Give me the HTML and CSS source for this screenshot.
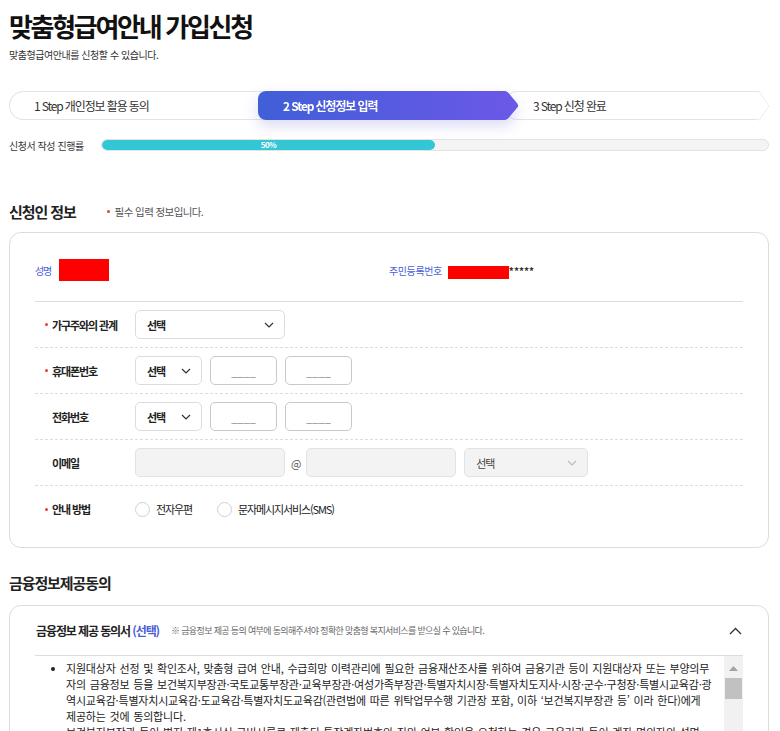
FILE: index.html
```html
<!DOCTYPE html>
<html lang="ko">
<head>
    <meta charset="UTF-8">
    <meta name="viewport" content="width=device-width, initial-scale=1.0">
    <title>맞춤형급여안내 가입신청</title>
    <link rel="stylesheet" href="styles.css">
</head>
<body>

<div class="page">
    <h1 class="title">맞춤형급여안내 가입신청</h1>
    <p class="desc">맞춤형급여안내를 신청할 수 있습니다.</p>

    <ol class="steps">
        <li class="step step-first">1 Step 개인정보 활용 동의</li>
        <li class="step step-on">2 Step 신청정보 입력</li>
        <li class="step step-last">3 Step 신청 완료</li>
    </ol>

    <div class="progress">
        <span class="progress-label">신청서 작성 진행률</span>
        <div class="progress-bar">
            <div class="progress-fill" style="width: 50%">50%</div>
        </div>
    </div>

    <div class="sec-head">
        <h2 class="sec-title">신청인 정보</h2>
        <span class="req-note"><i class="dot"></i>필수 입력 정보입니다.</span>
    </div>

    <div class="card">
        <div class="person">
            <div class="person-item">
                <span class="person-label">성명</span>
                <span class="mask mask-name"></span>
            </div>
            <div class="person-item">
                <span class="person-label">주민등록번호</span>
                <span class="mask mask-id"></span><span class="stars">*****</span>
            </div>
        </div>

        <div class="form-row">
            <div class="form-label"><i class="dot"></i>가구주와의 관계</div>
            <div class="form-field">
                <div class="select select-wide">
                    <span>선택</span>
                    <svg width="10" height="6" viewBox="0 0 10 6"><path d="M1 1l4 4 4-4" fill="none" stroke="#333" stroke-width="1.2"/></svg>
                </div>
            </div>
        </div>

        <div class="form-row">
            <div class="form-label"><i class="dot"></i>휴대폰번호</div>
            <div class="form-field">
                <div class="select select-small">
                    <span>선택</span>
                    <svg width="10" height="6" viewBox="0 0 10 6"><path d="M1 1l4 4 4-4" fill="none" stroke="#333" stroke-width="1.2"/></svg>
                </div>
                <input class="input input-phone" type="text" placeholder="____">
                <input class="input input-phone" type="text" placeholder="____">
            </div>
        </div>

        <div class="form-row">
            <div class="form-label"><i class="dot dot-none"></i>전화번호</div>
            <div class="form-field">
                <div class="select select-small">
                    <span>선택</span>
                    <svg width="10" height="6" viewBox="0 0 10 6"><path d="M1 1l4 4 4-4" fill="none" stroke="#333" stroke-width="1.2"/></svg>
                </div>
                <input class="input input-phone" type="text" placeholder="____">
                <input class="input input-phone" type="text" placeholder="____">
            </div>
        </div>

        <div class="form-row">
            <div class="form-label"><i class="dot dot-none"></i>이메일</div>
            <div class="form-field">
                <input class="input input-gray" type="text">
                <span class="at">@</span>
                <input class="input input-gray" type="text">
                <div class="select select-mail">
                    <span>선택</span>
                    <svg width="10" height="6" viewBox="0 0 10 6"><path d="M1 1l4 4 4-4" fill="none" stroke="#bbb" stroke-width="1.1"/></svg>
                </div>
            </div>
        </div>

        <div class="form-row">
            <div class="form-label"><i class="dot"></i>안내 방법</div>
            <div class="form-field">
                <label class="radio"><span class="radio-circle"></span>전자우편</label>
                <label class="radio"><span class="radio-circle"></span>문자메시지서비스(SMS)</label>
            </div>
        </div>
    </div>

    <div class="sec-head sec-head-2">
        <h2 class="sec-title">금융정보제공동의</h2>
    </div>

    <div class="card card-agree">
        <div class="agree-head">
            <strong class="agree-title">금융정보 제공 동의서 <em>(선택)</em></strong>
            <span class="agree-note">※ 금융정보 제공 등의 여부에 동의해주셔야 정확한 맞춤형 복지서비스를 받으실 수 있습니다.</span>
            <svg class="agree-toggle" width="13" height="8" viewBox="0 0 13 8"><path d="M1 7l5.5-5.5L12 7" fill="none" stroke="#333" stroke-width="1.3"/></svg>
        </div>
        <div class="agree-box">
            <div class="agree-scroll">
                <ul class="agree-list">
                    <li>지원대상자 선정 및 확인조사, 맞춤형 급여 안내, 수급희망 이력관리에 필요한 금융재산조사를 위하여 금융기관 등이 지원대상자 또는 부양의무자의 금융정보 등을 보건복지부장관·국토교통부장관·교육부장관·여성가족부장관·특별자치시장·특별자치도지사·시장·군수·구청장·특별시교육감·광역시교육감·특별자치시교육감·도교육감·특별자치도교육감(관련법에 따른 위탁업무수행 기관장 포함, 이하 ‘보건복지부장관 등’ 이라 한다)에게 제공하는 것에 동의합니다.</li>
                    <li>보건복지부장관 등이 별지 제1호서식 구비서류로 제출된 통장계좌번호의 진위 여부 확인을 요청하는 경우 금융기관 등이 계좌 명의자의 성명, 주민등록번호, 계좌번호 등을 보건복지부장관 등에게 제공하는 것에 동의합니다.</li>
                    <li>금융기관 등이 보건복지부장관 등에게 금융정보 등을 제공한 사실을 명의인에게 통보하지 아니하는 것에 동의합니다.</li>
                    <li>이 동의서의 효력은 조사 및 급여 안내가 끝나는 날까지 유지되며, 동의한 사람은 언제든지 서면으로 동의를 철회할 수 있습니다.</li>
                </ul>
            </div>
            <div class="scrollbar">
                <span class="scroll-up">
                    <svg width="9" height="5" viewBox="0 0 9 5"><path d="M0 5L4.5 0 9 5z" fill="#a3a3a3"/></svg>
                </span>
                <span class="scroll-thumb"></span>
            </div>
        </div>
    </div>
</div>

</body>
</html>
```

FILE: styles.css
```css
* {
    box-sizing: border-box;
}
html {
    scrollbar-width: none;
}
body {
    margin: 0;
    font-family: "Noto Sans CJK KR", "Noto Sans", sans-serif;
    color: #333;
    background: #fff;
    letter-spacing: -0.07em;
}
.page {
    padding: 0 11px 0 9px;
}
.title {
    margin: 0;
    padding-top: 8px;
    font-size: 26px;
    line-height: 36px;
    font-weight: 700;
    color: #111;
    letter-spacing: -2.3px;
}
.desc {
    margin: 4px 0 0;
    font-size: 10px;
    line-height: 14px;
    color: #333;
    letter-spacing: -0.45px;
}

/* step bar */
.steps {
    list-style: none;
    margin: 29px 0 0;
    padding: 0;
    display: flex;
    height: 29px;
}
.step {
    position: relative;
    display: flex;
    align-items: center;
    font-size: 12px;
    color: #333;
    padding-left: 24px;
}
.step-first {
    width: 253px;
    background: #fff;
    border: 1px solid #e4e4e4;
    border-right: 0;
    border-radius: 15px 0 0 15px;
}
.step-on {
    width: 249px;
    margin-left: -4px;
    padding-left: 25px;
    z-index: 2;
    color: #fff;
    font-weight: 700;
    border-radius: 8px 2px 2px 8px;
    background: linear-gradient(90deg, #405fd7, #6a58e7);
    filter: drop-shadow(0 6px 7px rgba(95, 90, 215, 0.22));
}
.step-on::after {
    content: "";
    position: absolute;
    top: 4px;
    right: -10px;
    width: 21px;
    height: 21px;
    background: #6a58e7;
    border-radius: 3px;
    transform: scaleX(0.85) rotate(45deg);
}
.step-last {
    width: 255px;
    margin-left: -2px;
    padding-left: 27px;
    background: #fff;
    border: 1px solid #e4e4e4;
    border-right: 0;
    border-radius: 12px 0 0 12px;
}
.step-last::after {
    content: "";
    position: absolute;
    top: 3px;
    right: -10px;
    width: 21px;
    height: 21px;
    background: #fff;
    border-top: 1px solid #e4e4e4;
    border-right: 1px solid #e4e4e4;
    border-radius: 0 3px 0 0;
    transform: scaleX(0.68) rotate(45deg);
}

/* progress */
.progress {
    display: flex;
    align-items: center;
    margin-top: 19px;
    height: 12px;
}
.progress-label {
    width: 92px;
    font-size: 10px;
    color: #333;
    letter-spacing: -0.45px;
}
.progress-bar {
    flex: 1;
    height: 12px;
    background: #f4f4f4;
    border: 1px solid #e2e2e2;
    border-radius: 6px;
    overflow: hidden;
}
.progress-fill {
    height: 100%;
    background: #33c6d5;
    border-radius: 6px;
    color: #fff;
    font-size: 8px;
    font-weight: 700;
    line-height: 10px;
    text-align: center;
    letter-spacing: -0.5px;
}

/* section heads */
.sec-head {
    display: flex;
    align-items: center;
    height: 20px;
    margin-top: 50px;
}
.sec-head-2 {
    margin-top: 24px;
}
.sec-title {
    margin: 0;
    font-size: 15px;
    font-weight: 700;
    color: #222;
    letter-spacing: -1.1px;
}
.req-note {
    display: flex;
    align-items: center;
    margin-left: 31px;
    font-size: 10.5px;
    color: #555;
    letter-spacing: -0.6px;
}
.dot {
    display: inline-block;
    width: 3px;
    height: 3px;
    margin-right: 4px;
    border-radius: 50%;
    background: #e2403f;
}
.req-note .dot {
    margin-right: 5px;
}
.dot-none {
    visibility: hidden;
}

/* cards */
.card {
    margin-top: 11px;
    border: 1px solid #dcdcdc;
    border-radius: 12px;
    padding: 0 25px 15px;
}
.person {
    display: flex;
    height: 69px;
    padding: 25px 0 19px;
    border-bottom: 1px solid #dcdcdc;
}
.person-item {
    width: 50%;
    display: flex;
    align-items: center;
}
.person-label {
    margin-right: 8px;
    font-size: 10px;
    color: #4a5fd8;
}
.person-item + .person-item .person-label {
    margin-right: 6px;
    letter-spacing: -0.4px;
}
.mask {
    display: inline-block;
    background: #ff0000;
}
.mask-name {
    width: 50px;
    height: 22px;
}
.mask-id {
    width: 61px;
    height: 13px;
    margin-top: 4px;
}
.stars {
    font-size: 10px;
    font-weight: 700;
    color: #333;
    letter-spacing: 0;
}

.form-row {
    display: flex;
    align-items: center;
    height: 46px;
    border-bottom: 1px dashed #dcdcdc;
}
.form-row:last-child {
    border-bottom: 0;
}
.form-label {
    width: 100px;
    padding-left: 10px;
    display: flex;
    align-items: center;
    font-size: 11px;
    font-weight: 700;
    color: #222;
}
.form-field {
    display: flex;
    align-items: center;
    gap: 8px;
}
.select {
    height: 29px;
    display: flex;
    align-items: center;
    justify-content: space-between;
    padding: 0 10px 0 11px;
    border: 1px solid #dcdcdc;
    border-radius: 5px;
    background: #fff;
    font-size: 11px;
    font-weight: 700;
    color: #222;
}
.select-wide {
    width: 150px;
}
.select-small {
    width: 67px;
}
.select-mail {
    width: 124px;
    background: #f3f3f3;
    border-color: #e2e2e2;
    font-weight: 400;
    color: #444;
}
.input {
    height: 29px;
    border: 1px solid #c9c9c9;
    border-radius: 5px;
    font-family: inherit;
    font-size: 11px;
    text-align: center;
    outline: none;
}
.input::placeholder {
    color: #888;
}
.input-phone {
    width: 67px;
}
.input-gray {
    width: 150px;
    background: #f3f3f3;
    border-color: #e2e2e2;
}
.at {
    margin: 0 -2px;
    font-size: 11px;
    color: #555;
}
.radio {
    display: flex;
    align-items: center;
    margin-right: 17px;
    font-size: 11px;
    color: #222;
}
.radio-circle {
    width: 15px;
    height: 15px;
    margin-right: 6px;
    border: 1px solid #d0d0d0;
    border-radius: 50%;
    background: #fff;
}

/* agreement */
.card-agree {
    margin-top: 13px;
    padding-bottom: 20px;
}
.agree-head {
    display: flex;
    align-items: center;
    height: 50px;
    padding-left: 1px;
    border-bottom: 1px solid #dcdcdc;
}
.agree-title {
    font-size: 12px;
    color: #222;
    letter-spacing: -1.1px;
}
.agree-title em {
    font-style: normal;
    color: #4a5fd8;
}
.agree-note {
    margin-left: 12px;
    font-size: 9px;
    color: #666;
    letter-spacing: -0.65px;
}
.agree-toggle {
    margin-left: auto;
    margin-right: 1px;
}
.agree-box {
    display: flex;
    height: 130px;
}
.agree-scroll {
    flex: 1;
    overflow-y: auto;
    scrollbar-width: none;
}
.agree-list {
    margin: 0;
    padding: 4px 12px 0 31px;
    font-size: 11px;
    line-height: 16px;
    color: #222;
    letter-spacing: -0.2px;
    word-spacing: 1px;
    word-break: break-all;
}
.scrollbar {
    width: 19px;
    display: flex;
    flex-direction: column;
    align-items: center;
    background: #f1f1f1;
}
.scroll-up {
    height: 22px;
    display: flex;
    align-items: center;
    padding-top: 3px;
}
.scroll-up svg {
    display: block;
}
.scroll-thumb {
    width: 17px;
    height: 21px;
    background: #c1c1c1;
}
```
